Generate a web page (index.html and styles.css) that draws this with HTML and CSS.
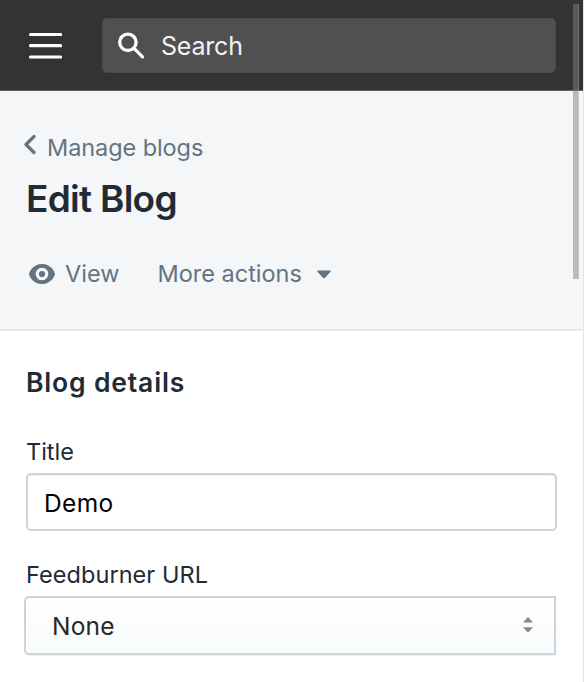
FILE: index.html
```
<!DOCTYPE html>
<html lang="en">
<head>
<meta charset="utf-8">
<title>Edit Blog</title>
<link rel="stylesheet" href="styles.css">
</head>
<body>
<header class="topbar">
  <svg class="menu" width="34" height="28" viewBox="0 0 34 28"><path d="M2.500 2.500h30M2.500 13.700h30M2.500 25h30"/></svg>
  <div class="search">
    <svg class="magnifier" width="28" height="28" viewBox="0 0 28 28"><circle cx="9.900" cy="10.300" r="8.200"/><path d="M15.800 16.200l8.700 8.700"/></svg>
    <span class="search-text">Search</span>
  </div>
</header>
<section class="page-head">
  <a class="back"><svg class="chevron" width="14" height="22" viewBox="0 0 14 22"><path d="M12 2.500L4 10.500l8 8"/></svg><span class="back-text">Manage blogs</span></a>
  <h1>Edit Blog</h1>
  <div class="actions">
    <a class="action"><svg class="eye" width="26" height="20" viewBox="0 0 26 20"><path fill-rule="evenodd" d="M13 0C4 0 0 8.300 0 10s4 10 13 10 13-8.300 13-10S22 0 13 0zm0 16.300a6.300 6.300 0 1 1 0-12.600 6.300 6.300 0 0 1 0 12.600z"/><circle cx="13" cy="10" r="3.100"/></svg><span class="view-text">View</span></a>
    <a class="action"><span class="more-text">More actions</span><svg class="caret" width="14" height="9" viewBox="0 0 14 9"><path d="M1 .5h12q1 .2.500 1.200L8.300 7.600q-1.300 1.100-2.600 0L.5 1.700Q0 .7 1 .5z"/></svg></a>
  </div>
</section>
<main class="details">
  <h2>Blog details</h2>
  <label class="label-title">Title</label>
  <div class="input"><span class="input-text">Demo</span></div>
  <label class="label-feed">Feedburner URL</label>
  <div class="select"><span class="select-text">None</span><svg class="sort" width="10" height="16" viewBox="0 0 10 16"><path d="M0 5.500L5 0l5 5.500zM0 10.200h10L5 15.700z"/></svg></div>
</main>
<div class="scrollbar"></div>
</body>
</html>
```
FILE: styles.css
```
* { box-sizing: border-box; }
body {
  margin: 0;
  width: 584px;
  height: 682px;
  overflow: hidden;
  position: relative;
  font-family: Inter, "Liberation Sans", sans-serif;
  background: #fff;
  color: #212b36;
  border-right: 1px solid #e4e5e7;
}
svg { display: block; flex: none; }
span { white-space: nowrap; }
.topbar {
  height: 91px;
  background: #333;
  border-bottom: 1px solid #656061;
  display: flex;
  align-items: center;
  padding: 1px 27px 0 28px;
}
.menu { fill: none; stroke: #fff; stroke-width: 3.2; stroke-linecap: round; }
.search {
  margin-left: 40px;
  flex: 1;
  height: 55px;
  border-radius: 5px;
  background: #505050;
  border: 1px solid #494949;
  display: flex;
  align-items: center;
  padding-left: 15px;
}
.magnifier { fill: none; stroke: #fff; stroke-width: 3.3; stroke-linecap: round; }
.search-text { margin-left: 15px; font-size: 25px; letter-spacing: -.2px; color: #f2f2f2; }
.page-head {
  height: 240px;
  background: #f4f6f8;
  border-bottom: 2px solid #e7e9ec;
  padding: 42px 22px 0;
  color: #637381;
}
.back { display: flex; height: 30px; align-items: center; line-height: 30px; }
.chevron { fill: none; stroke: #637381; stroke-width: 3.200; stroke-linecap: round; stroke-linejoin: round; margin-top: -6px; }
.back-text { margin-left: 11px; font-size: 23.5px; letter-spacing: -.08px; }
h1 { margin: 14px 0 0 4px; font-size: 37px; line-height: 44px; font-weight: 600; letter-spacing: -.72px; color: #212b36; white-space: nowrap; }
.actions { display: flex; margin: 38px 0 0 7px; height: 30px; line-height: 30px; font-size: 23.5px; }
.action { display: flex; align-items: center; }
.action + .action { margin-left: 38px; }
.eye { fill: #637381; }
.view-text { margin-left: 10px; }
.caret { fill: #637381; margin-left: 15px; }
.details { padding: 35px 26px 0; display: flex; flex-direction: column; }
h2 { margin: 0; font-size: 26.5px; line-height: 32px; font-weight: 600; letter-spacing: .83px; }
label { font-size: 23.5px; line-height: 30px; height: 30px; white-space: nowrap; }
.label-title { margin-top: 39px; }
.input {
  margin-top: 6px;
  height: 58px;
  width: 531px;
  border: 2px solid #ccd4db;
  border-radius: 5px;
  box-shadow: inset 0 1px 2px rgba(99,115,129,.1);
  color: #000;
  display: flex;
  align-items: center;
  padding: 1px 0 0 16px;
  font-size: 24.5px;
}
.input-text { letter-spacing: .35px; }
.label-feed { margin-top: 29px; letter-spacing: .06px; }
.select {
  margin: 6px 0 0 -2px;
  height: 59px;
  width: 532px;
  border: 2px solid #ccd4db;
  border-radius: 5px 0 0 5px;
  background: linear-gradient(#fff, #f9fafb);
  box-shadow: 0 1px 1px rgba(22,29,37,.06);
  color: #282828;
  display: flex;
  align-items: center;
  justify-content: space-between;
  padding: 0 21px 1px 26px;
  font-size: 24.5px;
}
.select-text { letter-spacing: .2px; padding-top: 2px; }
.sort { fill: #798c9c; }
.scrollbar {
  position: absolute;
  top: 4px;
  left: 573px;
  width: 6px;
  height: 275px;
  background: rgba(128,128,128,.5);
  border-right: 1px solid rgba(255,255,255,.15);
}
```
